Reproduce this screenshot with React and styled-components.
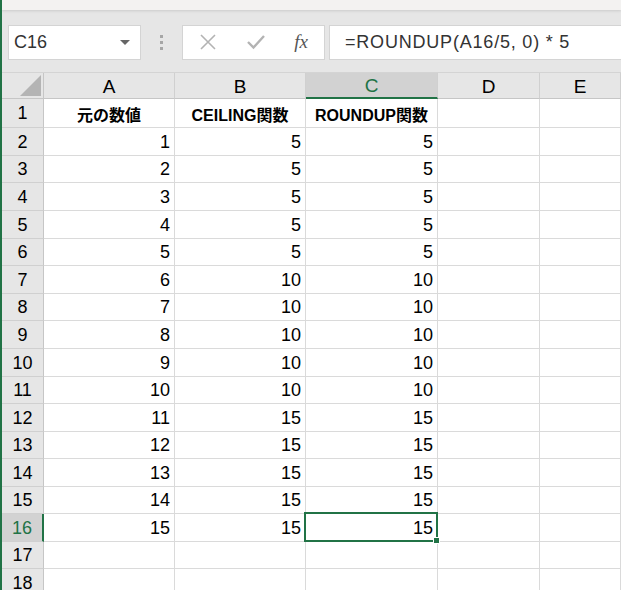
import styled, { createGlobalStyle } from "styled-components";

const GlobalStyle = createGlobalStyle`
  html, body { margin: 0; padding: 0; background: #fff; }
  body { font-family: "Liberation Sans", "Noto Sans CJK JP", sans-serif; }
`;

const GREEN = "#217346";

const data = [
  [1, 5, 5],
  [2, 5, 5],
  [3, 5, 5],
  [4, 5, 5],
  [5, 5, 5],
  [6, 10, 10],
  [7, 10, 10],
  [8, 10, 10],
  [9, 10, 10],
  [10, 10, 10],
  [11, 15, 15],
  [12, 15, 15],
  [13, 15, 15],
  [14, 15, 15],
  [15, 15, 15],
];

const columns = ["A", "B", "C", "D", "E"];
const rowHeights = [29, 28, 27, 28, 28, 27, 28, 27, 28, 28, 27, 28, 27, 28, 27, 28, 27, 28];

const App = () => {
  const rows = [["元の数値", "CEILING関数", "ROUNDUP関数", "", ""]];
  data.forEach((r) => rows.push([...r, "", ""]));
  rows.push(["", "", "", "", ""], ["", "", "", "", ""]);

  return (
    <Screen>
      <GlobalStyle />
      <TopBand />
      <FormulaBar>
        <NameBox>
          <span>C16</span>
          <Caret />
        </NameBox>
        <Dots>
          <i />
          <i />
          <i />
        </Dots>
        <Buttons>
          <svg width="18" height="18" viewBox="0 0 18 18">
            <path d="M2 2 L16 16 M16 2 L2 16" stroke="#b3b3b3" strokeWidth="1.6" fill="none" />
          </svg>
          <svg width="20" height="18" viewBox="0 0 20 18">
            <path d="M2 9 L7.5 14.5 L18 3" stroke="#b3b3b3" strokeWidth="2.4" fill="none" />
          </svg>
          <Fx>fx</Fx>
        </Buttons>
        <Formula>=ROUNDUP(A16/5, 0) * 5</Formula>
      </FormulaBar>
      <Sheet $rows={rowHeights}>
        <Corner>
          <Triangle />
        </Corner>
        {columns.map((c) => (
          <ColHead key={c} $active={c === "C"}>
            {c}
          </ColHead>
        ))}
        {rows.map((r, i) => (
          <Row key={i} r={r} n={i + 1} />
        ))}
      </Sheet>
    </Screen>
  );
};

const Row = ({ r, n }) => (
  <>
    <RowHead $active={n === 16}>{n}</RowHead>
    {r.map((v, j) => (
      <Cell key={j} $header={n === 1} $selected={n === 16 && j === 2}>
        {v}
      </Cell>
    ))}
  </>
);

const Screen = styled.div`
  width: 619px;
  height: 590px;
  overflow: hidden;
  border-left: 2px solid ${GREEN};
  display: flex;
  flex-direction: column;
  background: #fff;
`;

const TopBand = styled.div`
  height: 10px;
  flex: none;
  background: #f3f2f1;
  box-shadow: 0 1px 3px rgba(0, 0, 0, 0.12);
  position: relative;
  z-index: 1;
`;

const FormulaBar = styled.div`
  height: 63px;
  flex: none;
  background: #e6e6e6;
  display: flex;
  align-items: center;
  padding: 2px 0 0 6px;
  border-bottom: 1px solid #d4d4d4;
  box-sizing: border-box;
`;

const Box = styled.div`
  height: 35px;
  box-sizing: border-box;
  background: #fff;
  border: 1px solid #d4d4d4;
  display: flex;
  align-items: center;
`;

const NameBox = styled(Box)`
  width: 133px;
  padding: 0 10px 0 5px;
  justify-content: space-between;
  font-size: 18px;
  color: #333;
`;

const Caret = styled.div`
  width: 0;
  height: 0;
  border-left: 5px solid transparent;
  border-right: 5px solid transparent;
  border-top: 5px solid #666;
`;

const Dots = styled.div`
  width: 41px;
  display: flex;
  flex-direction: column;
  align-items: center;
  gap: 3px;
  i {
    width: 3px;
    height: 3px;
    background: #a6a6a6;
    display: block;
  }
`;

const Buttons = styled(Box)`
  width: 143px;
  padding: 0 16px 0 16px;
  justify-content: space-between;
`;

const Fx = styled.span`
  font-family: "Liberation Serif", serif;
  font-style: italic;
  font-size: 19px;
  color: #555;
`;

const Formula = styled(Box)`
  flex: 1;
  margin-left: 4px;
  border-right: none;
  padding-left: 15px;
  font-size: 18px;
  letter-spacing: 0.8px;
  color: #333;
`;

const Sheet = styled.div`
  flex: none;
  display: grid;
  grid-template-columns: 42px 131px 131px 132px 102px 1fr;
  grid-template-rows: 26px ${(p) => p.$rows.map((h) => `${h}px`).join(" ")};
  font-size: 18px;
  color: #000;
`;

const Corner = styled.div`
  background: #e6e6e6;
  border-right: 1px solid #c6c6c6;
  border-bottom: 1px solid #c6c6c6;
  display: flex;
  justify-content: flex-end;
  align-items: flex-end;
  padding: 0 2px 2px 0;
`;

const Triangle = styled.div`
  width: 21px;
  height: 21px;
  background: #b4b4b4;
  clip-path: polygon(100% 0, 100% 100%, 0 100%);
`;

const ColHead = styled.div`
  background: ${(p) => (p.$active ? "#d2d2d2" : "#e6e6e6")};
  color: ${(p) => (p.$active ? GREEN : "#000")};
  border-right: 1px solid #d0d0d0;
  border-bottom: ${(p) => (p.$active ? `2px solid ${GREEN}` : "1px solid #c6c6c6")};
  display: flex;
  align-items: center;
  justify-content: center;
  font-size: 19px;
  padding-top: 2px;
`;

const RowHead = styled.div`
  background: ${(p) => (p.$active ? "#d2d2d2" : "#e6e6e6")};
  color: ${(p) => (p.$active ? GREEN : "#000")};
  border-right: ${(p) => (p.$active ? `2px solid ${GREEN}` : "1px solid #c6c6c6")};
  border-bottom: 1px solid #d0d0d0;
  display: flex;
  align-items: center;
  justify-content: center;
  padding-top: 1px;
`;

const Cell = styled.div`
  border-right: 1px solid #dadada;
  border-bottom: 1px solid #dadada;
  display: flex;
  align-items: center;
  justify-content: ${(p) => (p.$header ? "center" : "flex-end")};
  padding: 1px 4px 0;
  font-weight: ${(p) => (p.$header ? 700 : 400)};
  font-size: ${(p) => (p.$header ? "16px" : "18px")};
  white-space: nowrap;
  position: relative;
  ${(p) =>
    p.$selected &&
    `
    &::after {
      content: "";
      position: absolute;
      left: -2px; top: -2px; right: -1px; bottom: -1px;
      border: 2px solid ${GREEN};
    }
    &::before {
      content: "";
      position: absolute;
      right: -3px; bottom: -3px;
      width: 5px; height: 5px;
      background: ${GREEN};
      border: 1px solid #fff;
      z-index: 2;
    }
  `}
`;

export default App;
